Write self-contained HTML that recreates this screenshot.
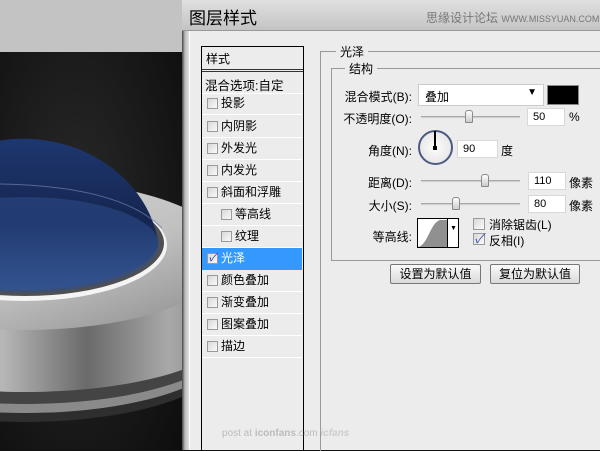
<!DOCTYPE html>
<html><head><meta charset="utf-8"><style>
*{margin:0;padding:0;box-sizing:border-box}
body{width:600px;height:450px;overflow:hidden;position:relative;background:#111;font-family:"Liberation Sans","Noto Sans CJK SC",sans-serif;font-size:12px;color:#000}
.a{position:absolute}
.cb{position:absolute;width:11px;height:11px;border:1px solid #9a9a9a;background:linear-gradient(135deg,#d8d8d8,#fafafa)}
.row{position:absolute;left:202px;width:100px;height:22px;border-bottom:1px solid #fff;line-height:21px}
.row span{position:absolute;left:19px}
.in{position:absolute;background:#fff;border:1px solid #d8d8d8;height:18px;line-height:17px;padding-left:5px;font-size:11px}
.sl{position:absolute;height:3px;border-top:1px solid #a8a8a8;border-bottom:1px solid #e8e8e8;background:#d0d0d0}
.th{position:absolute;width:8px;height:13px;border:1px solid #8a8a8a;border-radius:3px 3px 1px 1px;background:linear-gradient(#fff,#ccc)}
.lb{position:absolute;text-align:right;white-space:nowrap}
.bt{position:absolute;height:20px;border:1px solid #777;border-radius:2px;background:linear-gradient(#fafafa,#dadada);text-align:center;line-height:18px;font-size:12px}
</style></head><body>
<svg class="a" style="left:0;top:0" width="190" height="450">
<defs>
<radialGradient id="bg" cx="0.4" cy="0.5" r="0.8"><stop offset="0" stop-color="#2a2a2a"/><stop offset="1" stop-color="#0b0b0b"/></radialGradient>
<linearGradient id="metal" x1="0" x2="1"><stop offset="0" stop-color="#9a9a9a"/><stop offset="0.3" stop-color="#d0d0d0"/><stop offset="0.45" stop-color="#b5b5b5"/><stop offset="0.65" stop-color="#6a6a6a"/><stop offset="0.85" stop-color="#a8a8a8"/><stop offset="1" stop-color="#808080"/></linearGradient>
<linearGradient id="top" x1="0" y1="0" x2="1" y2="1"><stop offset="0" stop-color="#e0e0e0"/><stop offset="0.6" stop-color="#c0c0c0"/><stop offset="1" stop-color="#8a8a8a"/></linearGradient>
<linearGradient id="dome" x1="0" y1="0" x2="0" y2="1"><stop offset="0" stop-color="#1e3770"/><stop offset="0.55" stop-color="#15254f"/><stop offset="1" stop-color="#3a5a95"/></linearGradient>
</defs>
<rect width="190" height="450" fill="url(#bg)"/>
<rect width="190" height="52" fill="#c3c3c3"/>
<ellipse cx="25" cy="352" rx="205" ry="70" fill="#2e2e2e"/>
<ellipse cx="25" cy="345" rx="205" ry="68" fill="#8a8a8a"/>
<ellipse cx="25" cy="338" rx="205" ry="66" fill="#444"/>
<path d="M-180 255 L-180 330 A205 62 0 0 0 230 330 L230 255 Z" fill="url(#metal)"/>
<ellipse cx="25" cy="255" rx="205" ry="75" fill="url(#top)"/>
<ellipse cx="25" cy="245" rx="142" ry="56" fill="#f4f4f4"/>
<ellipse cx="25" cy="243" rx="139" ry="53" fill="#505050"/>
<path d="M-112 240 A137 122 0 0 1 158 240 L158 246 A136 50 0 0 1 -112 246 Z" fill="url(#dome)"/>
<ellipse cx="25" cy="245" rx="134" ry="48" fill="#2d4e8c" opacity="0.55"/>
<path d="M0 184 Q120 186 162 228" stroke="#6a80b0" stroke-width="1" fill="none" opacity="0.7"/>
</svg>
<div class="a" style="left:182px;top:0;width:418px;height:450px;background:linear-gradient(90deg,#444 0,#bbb 3px,#d6d6d6 6px,#ececec 8px)"></div>
<div class="a" style="left:182px;top:0;width:418px;height:31px;background:linear-gradient(#e0e0e0,#c4c4c4);border-bottom:1px solid #999"></div>
<div class="a" style="left:189px;top:4px;font-size:17px">图层样式</div>
<div class="a" style="left:426px;top:9px;font-size:12px;color:#777">思缘设计论坛 <span style="font-size:9px">WWW.MISSYUAN.COM</span></div>
<div class="a" style="left:189px;top:31px;width:411px;height:419px;background:#ececec;border-left:1px solid #fff"></div>
<div class="a" style="left:201px;top:46px;width:103px;height:404px;border:1px solid #000;border-bottom:none;background:#ececec"></div>
<div class="a" style="left:206px;top:50px">样式</div>
<div class="a" style="left:202px;top:69px;width:101px;height:3px;border-top:1px solid #333;border-bottom:1px solid #333"></div>
<div class="a" style="left:205px;top:75px;font-size:12.5px">混合选项:自定</div>
<div class="a" style="left:202px;top:93px;width:101px;border-top:1px solid #fff"></div>
<div class="row" style="top:93px"><i class="cb" style="left:5px;top:5px"></i><span>投影</span></div>
<div class="row" style="top:116px"><i class="cb" style="left:5px;top:5px"></i><span>内阴影</span></div>
<div class="row" style="top:138px"><i class="cb" style="left:5px;top:5px"></i><span>外发光</span></div>
<div class="row" style="top:160px"><i class="cb" style="left:5px;top:5px"></i><span>内发光</span></div>
<div class="row" style="top:182px"><i class="cb" style="left:5px;top:5px"></i><span>斜面和浮雕</span></div>
<div class="row" style="top:204px"><i class="cb" style="left:19px;top:5px"></i><span style="left:33px">等高线</span></div>
<div class="row" style="top:226px"><i class="cb" style="left:19px;top:5px"></i><span style="left:33px">纹理</span></div>
<div class="row" style="top:248px;background:#3399ff;color:#fff;border-bottom-color:#3399ff"><i class="cb" style="left:5px;top:5px;color:#2a3a9a;font-size:11px;line-height:9px;text-align:center">✓</i><span>光泽</span></div>
<div class="row" style="top:270px"><i class="cb" style="left:5px;top:5px"></i><span>颜色叠加</span></div>
<div class="row" style="top:292px"><i class="cb" style="left:5px;top:5px"></i><span>渐变叠加</span></div>
<div class="row" style="top:314px"><i class="cb" style="left:5px;top:5px"></i><span>图案叠加</span></div>
<div class="row" style="top:336px"><i class="cb" style="left:5px;top:5px"></i><span>描边</span></div>
<div class="a" style="left:222px;top:428px;font-size:10px;color:#bbb">post at <b>iconfans</b>.com <i style="color:#ccc"><b>icfans</b></i></div>
<div class="a" style="left:320px;top:51px;width:290px;height:400px;border:1px solid #999;border-right:none;border-bottom:none"></div>
<div class="a" style="left:336px;top:43px;background:#ececec;padding:0 4px">光泽</div>
<div class="a" style="left:331px;top:68px;width:290px;height:193px;border:1px solid #999;border-right:none"></div>
<div class="a" style="left:345px;top:60px;background:#ececec;padding:0 4px">结构</div>
<div class="lb" style="right:188px;top:88px">混合模式(B):</div>
<div class="a" style="left:418px;top:84px;width:126px;height:22px;background:#fff;border:1px solid #ccc;padding:3px 0 0 6px">叠加<span style="position:absolute;right:6px;top:2px;font-size:10px">▼</span></div>
<div class="a" style="left:547px;top:85px;width:32px;height:20px;background:#000;border:1px solid #888"></div>
<div class="lb" style="right:188px;top:110px">不透明度(O):</div>
<div class="sl" style="left:421px;top:116px;width:99px"></div><div class="th" style="left:465px;top:110px"></div>
<div class="in" style="left:527px;top:108px;width:38px">50</div><div class="a" style="left:569px;top:110px">%</div>
<div class="lb" style="right:188px;top:142px">角度(N):</div>
<div class="a" style="left:418px;top:130px;width:35px;height:35px;border-radius:50%;border:2px solid #4a5a80;background:radial-gradient(#fdfdfd,#e0e0e0)"></div>
<div class="a" style="left:434px;top:131px;width:2px;height:16px;background:#000"></div>
<div class="a" style="left:433px;top:146px;width:4px;height:4px;background:#000"></div>
<div class="in" style="left:457px;top:140px;width:41px">90</div><div class="a" style="left:501px;top:142px">度</div>
<div class="lb" style="right:188px;top:174px">距离(D):</div>
<div class="sl" style="left:421px;top:180px;width:99px"></div><div class="th" style="left:481px;top:174px"></div>
<div class="in" style="left:528px;top:172px;width:38px">110</div><div class="a" style="left:569px;top:174px">像素</div>
<div class="lb" style="right:188px;top:197px">大小(S):</div>
<div class="sl" style="left:421px;top:203px;width:99px"></div><div class="th" style="left:452px;top:197px"></div>
<div class="in" style="left:528px;top:195px;width:38px">80</div><div class="a" style="left:569px;top:197px">像素</div>
<div class="lb" style="right:188px;top:228px">等高线:</div>
<div class="a" style="left:417px;top:218px;width:42px;height:30px;border:1px solid #000;background:#fff"></div>
<svg class="a" style="left:418px;top:219px" width="30" height="28"><path d="M0 28 C10 26 12 4 22 1 L30 1 L30 28 Z" fill="#909090"/></svg>
<div class="a" style="left:447px;top:219px;width:1px;height:28px;background:#000"></div>
<div class="a" style="left:450px;top:225px;font-size:7px">▼</div>
<i class="cb" style="left:473px;top:218px;width:12px;height:12px"></i><div class="a" style="left:489px;top:216px">消除锯齿(L)</div>
<i class="cb" style="left:473px;top:233px;width:12px;height:12px;color:#3a4a9a;font-size:13px;line-height:10px;text-align:center">✓</i><div class="a" style="left:489px;top:232px">反相(I)</div>
<div class="bt" style="left:390px;top:264px;width:91px">设置为默认值</div>
<div class="bt" style="left:490px;top:264px;width:90px">复位为默认值</div>
</body></html>
